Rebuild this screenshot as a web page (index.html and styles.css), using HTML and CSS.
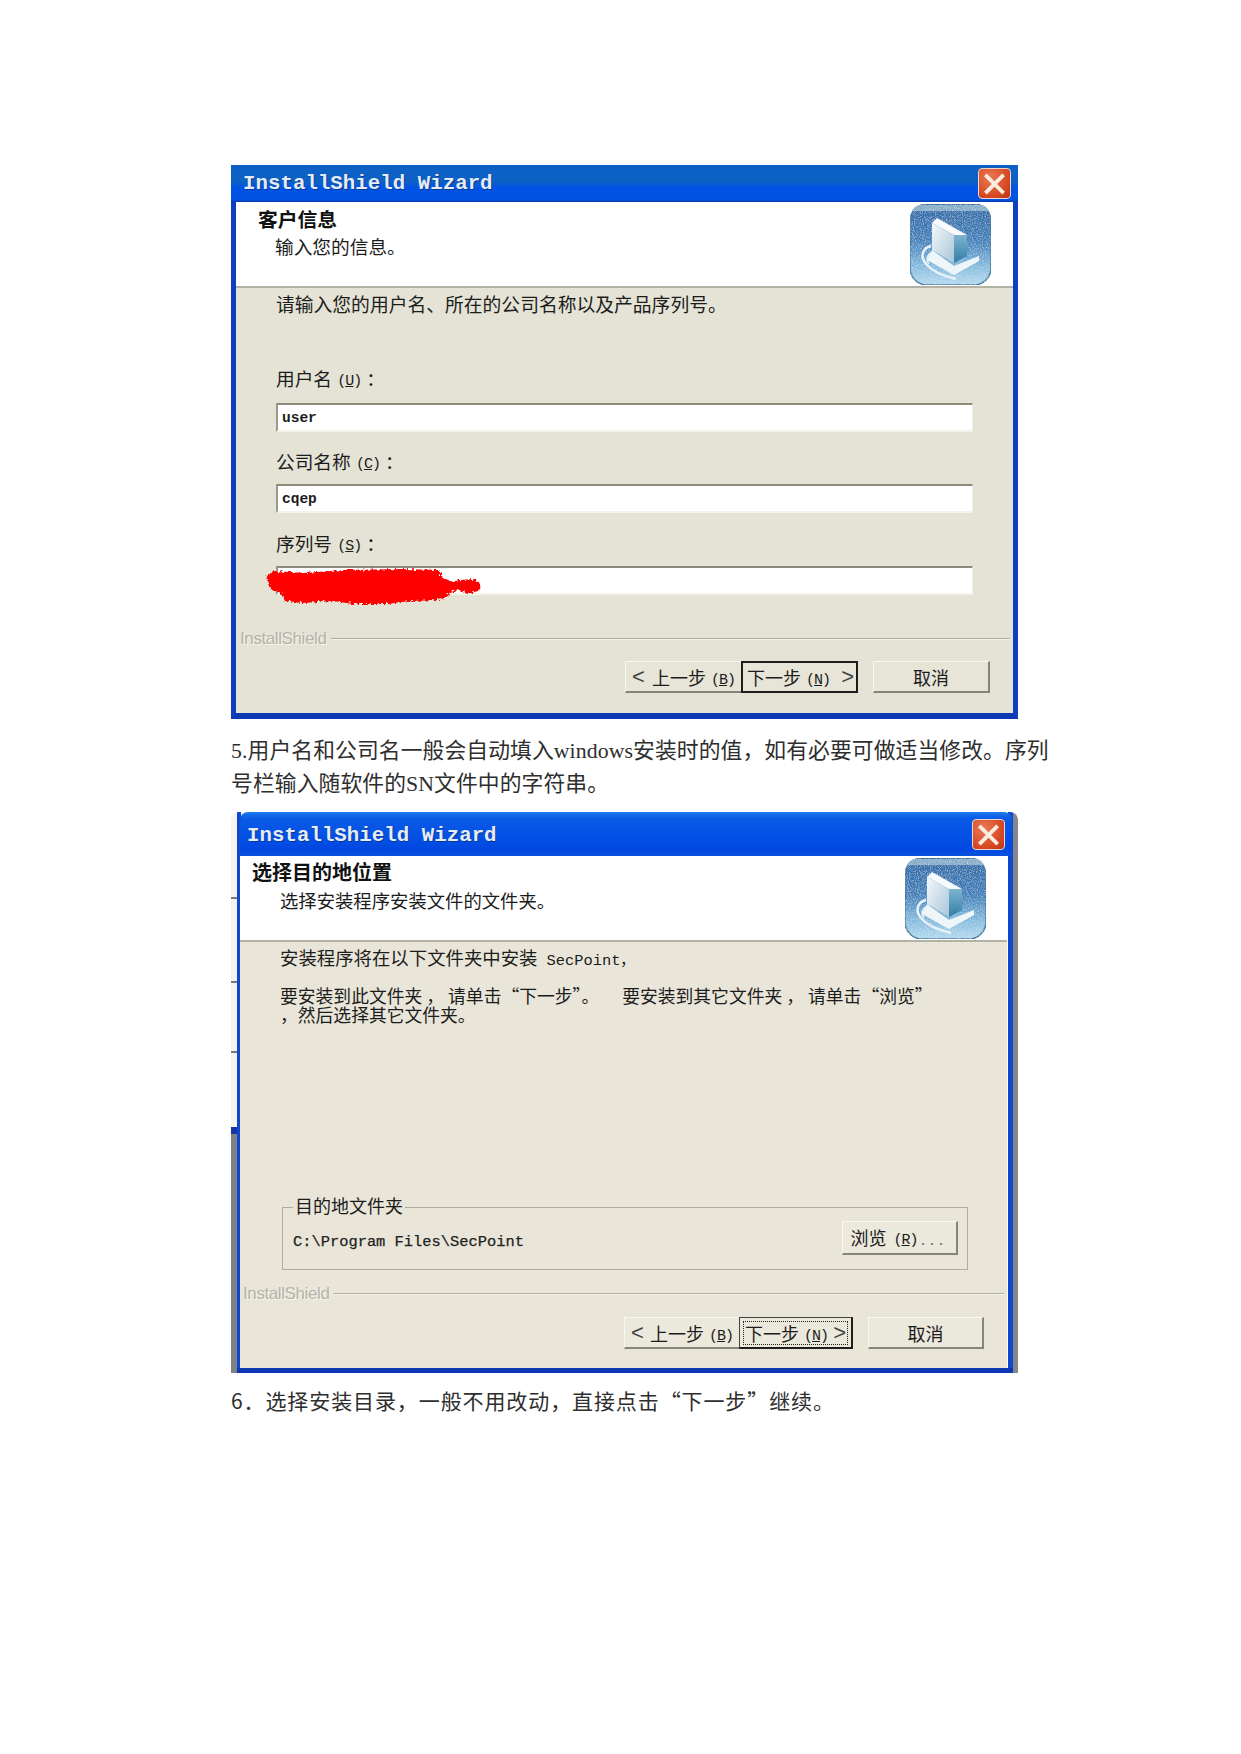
FILE: index.html
```html
<!DOCTYPE html>
<html lang="zh-CN">
<head>
  <meta charset="UTF-8">
  <title>InstallShield Wizard</title>
  <link rel="stylesheet" href="styles.css">
</head>
<body>
  <svg class="defs" width="0" height="0">
    <defs>
      <linearGradient id="tile" x1="0" y1="0" x2="0" y2="1">
        <stop offset="0" stop-color="#296aa8"/>
        <stop offset="0.45" stop-color="#3f80ba"/>
        <stop offset="0.75" stop-color="#7fb8dc"/>
        <stop offset="1" stop-color="#b4daee"/>
      </linearGradient>
      <linearGradient id="face" x1="0" y1="0" x2="1" y2="1">
        <stop offset="0" stop-color="#f4f8fb"/>
        <stop offset="1" stop-color="#a9c6da"/>
      </linearGradient>
      <linearGradient id="side" x1="0" y1="0" x2="0" y2="1">
        <stop offset="0" stop-color="#7fb4cf"/>
        <stop offset="1" stop-color="#2f7ea6"/>
      </linearGradient>
      <filter id="grain" x="0" y="0" width="100%" height="100%">
        <feTurbulence type="fractalNoise" baseFrequency="0.9" numOctaves="2" seed="4" result="n"/>
        <feColorMatrix in="n" type="matrix" values="0 0 0 0 1  0 0 0 0 1  0 0 0 0 1  0 0 0 0.9 -0.4" result="w"/>
        <feComposite in="w" in2="SourceAlpha" operator="in" result="speck"/>
        <feMerge>
          <feMergeNode in="SourceGraphic"/>
          <feMergeNode in="speck"/>
        </feMerge>
      </filter>
      <filter id="rough" x="-5%" y="-15%" width="110%" height="130%">
        <feTurbulence type="fractalNoise" baseFrequency="0.35" numOctaves="2" seed="7"/>
        <feDisplacementMap in="SourceGraphic" scale="6" xChannelSelector="R" yChannelSelector="G"/>
      </filter>
      <symbol id="setup-icon" viewBox="0 0 83 83">
        <g filter="url(#grain)">
          <rect x="1" y="1" width="81" height="81" rx="17" fill="url(#tile)" stroke="#3a7398" stroke-width="1.5"/>
          <path d="M13 2h57c5 0 8 2 10 6H3c2-4 5-6 10-6z" fill="#86aecb"/>
        </g>
        <path d="M22 43c-9 2-11 11-5 18 6 7 17 12 30 15" fill="none" stroke="#e6f2f8" stroke-width="2.5"/>
        <path d="M23 50c-5 1-6 7-3 11" fill="none" stroke="#dcecf5" stroke-width="2"/>
        <path d="M23 47l22 16 25-10v5L45 72 18 57z" fill="#eff6fa"/>
        <path d="M23 20l5-5 30 17-13 0z" fill="#f7fbfd"/>
        <path d="M23 20l22 12 0 28-22-13z" fill="url(#face)"/>
        <path d="M45 32h13v21l-13 7z" fill="url(#side)"/>
      </symbol>
      <symbol id="close-x" viewBox="0 0 32 30">
        <path d="M8 7l16 16M24 7L8 23" stroke="#fbeee0" stroke-width="4" stroke-linecap="square" fill="none"/>
      </symbol>
    </defs>
  </svg>

  <main class="page">
    <section class="win win-1">
      <div class="titlebar">
        <span class="title">InstallShield Wizard</span>
        <span class="close"><svg width="32" height="30"><use href="#close-x"/></svg></span>
      </div>
      <div class="head">
        <div>
          <h2 class="head-title">客户信息</h2>
          <p class="head-sub">输入您的信息。</p>
        </div>
        <svg class="setup" width="83" height="83"><use href="#setup-icon"/></svg>
      </div>
      <div class="body">
        <div class="content">
          <p class="intro">请输入您的用户名、所在的公司名称以及产品序列号。</p>
          <div class="field field-first">
            <div class="label">用户名 <span class="key">(<u>U</u>)</span>：</div>
            <div class="input">user</div>
          </div>
          <div class="field">
            <div class="label">公司名称 <span class="key">(<u>C</u>)</span>：</div>
            <div class="input">cqep</div>
          </div>
          <div class="field serial">
            <div class="label">序列号 <span class="key">(<u>S</u>)</span>：</div>
            <div class="input"></div>
            <svg class="scribble" width="218" height="40" viewBox="0 0 218 40">
              <path d="M3 10l8-5 30 2 40-3 60-1 34 1 6 9 10 2 7-1 12-1 6 3 2 6-5 4-10 1-8-3-8 2-3 5-8 3-30 1-22 3-34 0-20-3-30 2-18-2-4-8-10-4-3-8z" fill="#fe0000" filter="url(#rough)"/>
            </svg>
          </div>
        </div>
        <div class="etched"><span class="brand">InstallShield</span><span class="rule"></span></div>
        <div class="actions">
          <button class="btn btn-prev"><span class="chev">&lt;</span><span>上一步 <span class="key">(<u>B</u>)</span></span></button>
          <button class="btn btn-next"><span>下一步 <span class="key">(<u>N</u>)</span></span><span class="chev">&gt;</span></button>
          <button class="btn btn-cancel">取消</button>
        </div>
      </div>
    </section>

    <p class="note note-1">5.用户名和公司名一般会自动填入windows安装时的值，如有必要可做适当修改。序列<br>号栏输入随软件的SN文件中的字符串。</p>

    <section class="win win-2">
      <div class="titlebar">
        <span class="title">InstallShield Wizard</span>
        <span class="close"><svg width="32" height="30"><use href="#close-x"/></svg></span>
      </div>
      <div class="head">
        <div>
          <h2 class="head-title">选择目的地位置</h2>
          <p class="head-sub">选择安装程序安装文件的文件夹。</p>
        </div>
        <svg class="setup" width="83" height="83"><use href="#setup-icon"/></svg>
      </div>
      <div class="body">
        <div class="content">
          <p class="intro">安装程序将在以下文件夹中安装 <span class="mono">SecPoint，</span></p>
          <p class="hint">要安装到此文件夹<span class="pad">，</span>请单击“下一步”。<span class="pad-wide"></span>要安装到其它文件夹<span class="pad">，</span>请单击“浏览”<br>，然后选择其它文件夹。</p>
          <fieldset class="group">
            <legend>目的地文件夹</legend>
            <span class="path">C:\Program Files\SecPoint</span>
            <button class="btn btn-browse">浏览 <span class="key">(<u>R</u>)</span><span class="dots">...</span></button>
          </fieldset>
        </div>
        <div class="etched"><span class="brand">InstallShield</span><span class="rule"></span></div>
        <div class="actions">
          <button class="btn btn-prev"><span class="chev">&lt;</span><span>上一步 <span class="key">(<u>B</u>)</span></span></button>
          <button class="btn btn-next"><span class="focus"><span>下一步 <span class="key">(<u>N</u>)</span></span><span class="chev">&gt;</span></span></button>
          <button class="btn btn-cancel">取消</button>
        </div>
      </div>
    </section>

    <p class="note note-2">6．选择安装目录，一般不用改动，直接点击“下一步”继续。</p>
  </main>
</body>
</html>
```

FILE: styles.css
```css
* {
  box-sizing: border-box;
}
body {
  margin: 0;
  background: #fff;
  font-family: "Liberation Sans", "Noto Sans CJK SC", sans-serif;
  color: #1c1c1c;
}
.defs {
  display: block;
  height: 0;
}
.page {
  padding: 165px 0 0 231px;
  min-height: 1754px;
}

/* window */
.win {
  display: flex;
  flex-direction: column;
  width: 787px;
}
.win-1 {
  height: 554px;
  border-left: 5px solid #0f3fc0;
  border-right: 5px solid #0f3fc0;
  border-bottom: 6px solid #0c38b4;
}
.win-2 {
  height: 561px;
  margin-top: 11px;
  padding: 0 11px 5px 9px;
  background:
    linear-gradient(#0c38b4, #0c38b4) 6px 100% / 776px 5px no-repeat,
    linear-gradient(90deg, #0f47cf 0 4px, transparent 4px) 6px 0 / 10px 100% no-repeat,
    linear-gradient(90deg, transparent 0 777px, #0f47cf 777px 782px, #85858c 782px) 0 0 / 100% 100% no-repeat,
    linear-gradient(180deg, #f6f4ee 0 85px, #777 85px 87px, #f6f4ee 87px 169px, #777 169px 171px, #f6f4ee 171px 239px, #777 239px 241px, #f6f4ee 241px 315px, #1a34a8 315px 322px, #7f8285 322px) 0 0 / 6px 100% no-repeat;
  border-radius: 8px 8px 0 0;
}
.titlebar {
  display: flex;
  align-items: center;
  justify-content: space-between;
  flex: none;
  background: linear-gradient(180deg, #0d60c4 0 45%, #0053e4 62%, #0052e2 94%, #0a3aa6);
}
.win-1 .titlebar {
  height: 37px;
  margin: 0 -5px;
  padding: 0 7px 0 12px;
}
.win-2 .titlebar {
  height: 44px;
  margin-right: -5px;
  padding: 0 7px 0 7px;
  border-radius: 8px 8px 0 0;
  background: linear-gradient(180deg, #1c7cec, #0a5be6 14%, #0048e2 85%, #0b52dc);
}
.win-2 .title {
  padding-top: 2px;
}
.title {
  font-family: "Liberation Mono", monospace;
  font-weight: bold;
  font-size: 20.8px;
  color: #e4ecf6;
  text-shadow: 1px 1px 0 #0a3a90;
}
.close {
  display: flex;
  width: 33px;
  height: 31px;
  border: 1.5px solid #e8d8d0;
  border-radius: 4px;
  background: radial-gradient(circle at 35% 30%, #ea7a55, #d4451f 70%, #b53416);
}
.head {
  display: flex;
  justify-content: space-between;
  flex: none;
  height: 86px;
  padding: 1px 21px 0 22px;
  background: #fff;
  border-bottom: 2px solid #b3b2a6;
}
.win-2 .head {
  padding: 1px 20px 0 12px;
}
.head-title {
  margin: 5px 0 0;
  font-size: 19.8px;
  line-height: 24px;
  font-weight: bold;
  color: #111;
}
.head-sub {
  margin: 4px 0 0 17px;
  font-size: 18.7px;
  line-height: 24px;
}
.win-2 .head-title {
  margin-top: 3px;
  font-size: 20px;
  line-height: 26px;
}
.win-2 .head-sub {
  margin: 4px 0 0 28px;
  font-size: 18.35px;
}
.setup {
  flex: none;
}

/* body */
.body {
  display: flex;
  flex-direction: column;
  flex: 1;
  background: #e4e3d5;
}
.win-2 .body {
  background: #e9e6d9;
}
.content {
  padding: 6px 40px 0 40px;
}
.intro {
  margin: 0;
  font-size: 18.8px;
  line-height: 24px;
}
.win-2 .content {
  height: 340px;
  padding: 5px 39.5px 0 40px;
}
.win-2 .intro {
  font-size: 18.4px;
}
.mono {
  margin-left: 4px;
  font-family: "Liberation Mono", monospace;
  font-size: 15.4px;
}
.hint {
  margin: 13px 0 0;
  font-family: "Noto Sans CJK SC", sans-serif;
  font-size: 17.8px;
  line-height: 19px;
}
.pad {
  margin: 0 4px;
}
.pad-wide {
  display: inline-block;
  width: 23px;
}
.field {
  margin-top: 19px;
}
.field-first {
  margin-top: 50px;
}
.serial {
  position: relative;
  margin-top: 20px;
}
.label {
  margin-bottom: 7px;
  font-size: 18.7px;
  line-height: 24px;
}
.field-first .label {
  margin-bottom: 9px;
}
.serial .label {
  margin-bottom: 7px;
}
.key {
  font-family: "Liberation Mono", monospace;
  font-size: 15px;
  letter-spacing: -1px;
  vertical-align: 1px;
}
.label .key {
  margin-right: 5px;
}
.input {
  height: 29px;
  padding-left: 4px;
  font-family: "Liberation Mono", monospace;
  font-weight: bold;
  font-size: 14.5px;
  line-height: 26px;
  background: #fff;
  border-top: 2.5px solid #8d8c7b;
  border-left: 2px solid #9a998a;
  border-right: 1px solid #f0efe6;
  border-bottom: 2px solid #f4f3ea;
}
.scribble {
  position: absolute;
  left: -13px;
  top: 33px;
}
.etched {
  display: flex;
  align-items: center;
  gap: 5px;
  height: 24px;
  margin: 32px 3px 0 4px;
}
.brand {
  font-size: 17px;
  letter-spacing: -0.4px;
  color: #b4b4a8;
  text-shadow: 1px 1px 0 #f6f6ee;
}
.rule {
  flex: 1;
  border-top: 1px solid #aeac9c;
  border-bottom: 1px solid #f5f4ea;
}
.win-2 .etched {
  margin: 0 3px 0 3px;
}
.actions {
  display: flex;
  justify-content: flex-end;
  margin: 10px 23px 0 0;
}
.win-2 .actions {
  margin: 11px 23px 0 0;
}
.btn {
  height: 32px;
  padding: 0;
  font-family: "Liberation Sans", "Noto Sans CJK SC", sans-serif;
  font-size: 18px;
  color: #1c1c1c;
  background: #e6e5d8;
  border-style: solid;
  border-width: 1px 2px 2px 1px;
  border-color: #f8f8f0 #86857a #86857a #f8f8f0;
}
.win-2 .btn {
  background: #ebe8dc;
}
.chev {
  font-size: 22px;
  line-height: 22px;
  color: #444;
}
.btn-prev,
.btn-next,
.focus {
  display: flex;
  align-items: center;
  justify-content: space-between;
}
.btn-prev {
  width: 116px;
  padding: 0 6px 0 6px;
  border-right: 0;
}
.btn-next {
  width: 117px;
  padding: 0 2px 0 4px;
  border: 2px solid #1d1d1d;
}
.btn-cancel {
  width: 117px;
  margin-left: 15px;
}
.win-2 .btn-next {
  width: 114px;
  padding: 0;
  border-width: 1px 2px 2px 1px;
  border-color: #444 #1d1d1d #1d1d1d #444;
}
.focus {
  flex: 1;
  height: 24px;
  margin: 0 3px;
  padding: 0 1px;
  border: 1px dotted #222;
}
.win-2 .btn-prev {
  width: 115px;
}
.win-2 .btn-cancel {
  width: 116px;
}

/* destination group */
.group {
  display: flex;
  align-items: center;
  justify-content: space-between;
  height: 73px;
  margin: 173px 0 0 2px;
  padding: 0 9px 3px 10px;
  border: 1px solid #aeac9c;
}
.group legend {
  padding: 0 2px;
  font-size: 18px;
  line-height: 20px;
}
.path {
  font-family: "Liberation Mono", monospace;
  font-size: 15.4px;
  color: #222;
  -webkit-text-stroke: 0.25px #222;
}
.btn-browse {
  width: 116px;
  height: 34px;
  margin-top: -8px;
}
.btn-browse .key {
  margin-left: 2px;
}
.dots {
  margin-left: 3px;
  color: #777;
  letter-spacing: 4px;
}

/* document text */
.note {
  margin: 0;
  font-family: "Liberation Serif", "Noto Sans CJK SC", serif;
  color: #2e2e2e;
}
.note-1 {
  margin-top: 16px;
  font-size: 21.8px;
  line-height: 33px;
  letter-spacing: 0.08px;
}
.note-2 {
  margin-top: 10px;
  font-family: "Noto Sans CJK SC", serif;
  font-size: 21px;
  line-height: 34px;
  letter-spacing: 0.9px;
}
```
